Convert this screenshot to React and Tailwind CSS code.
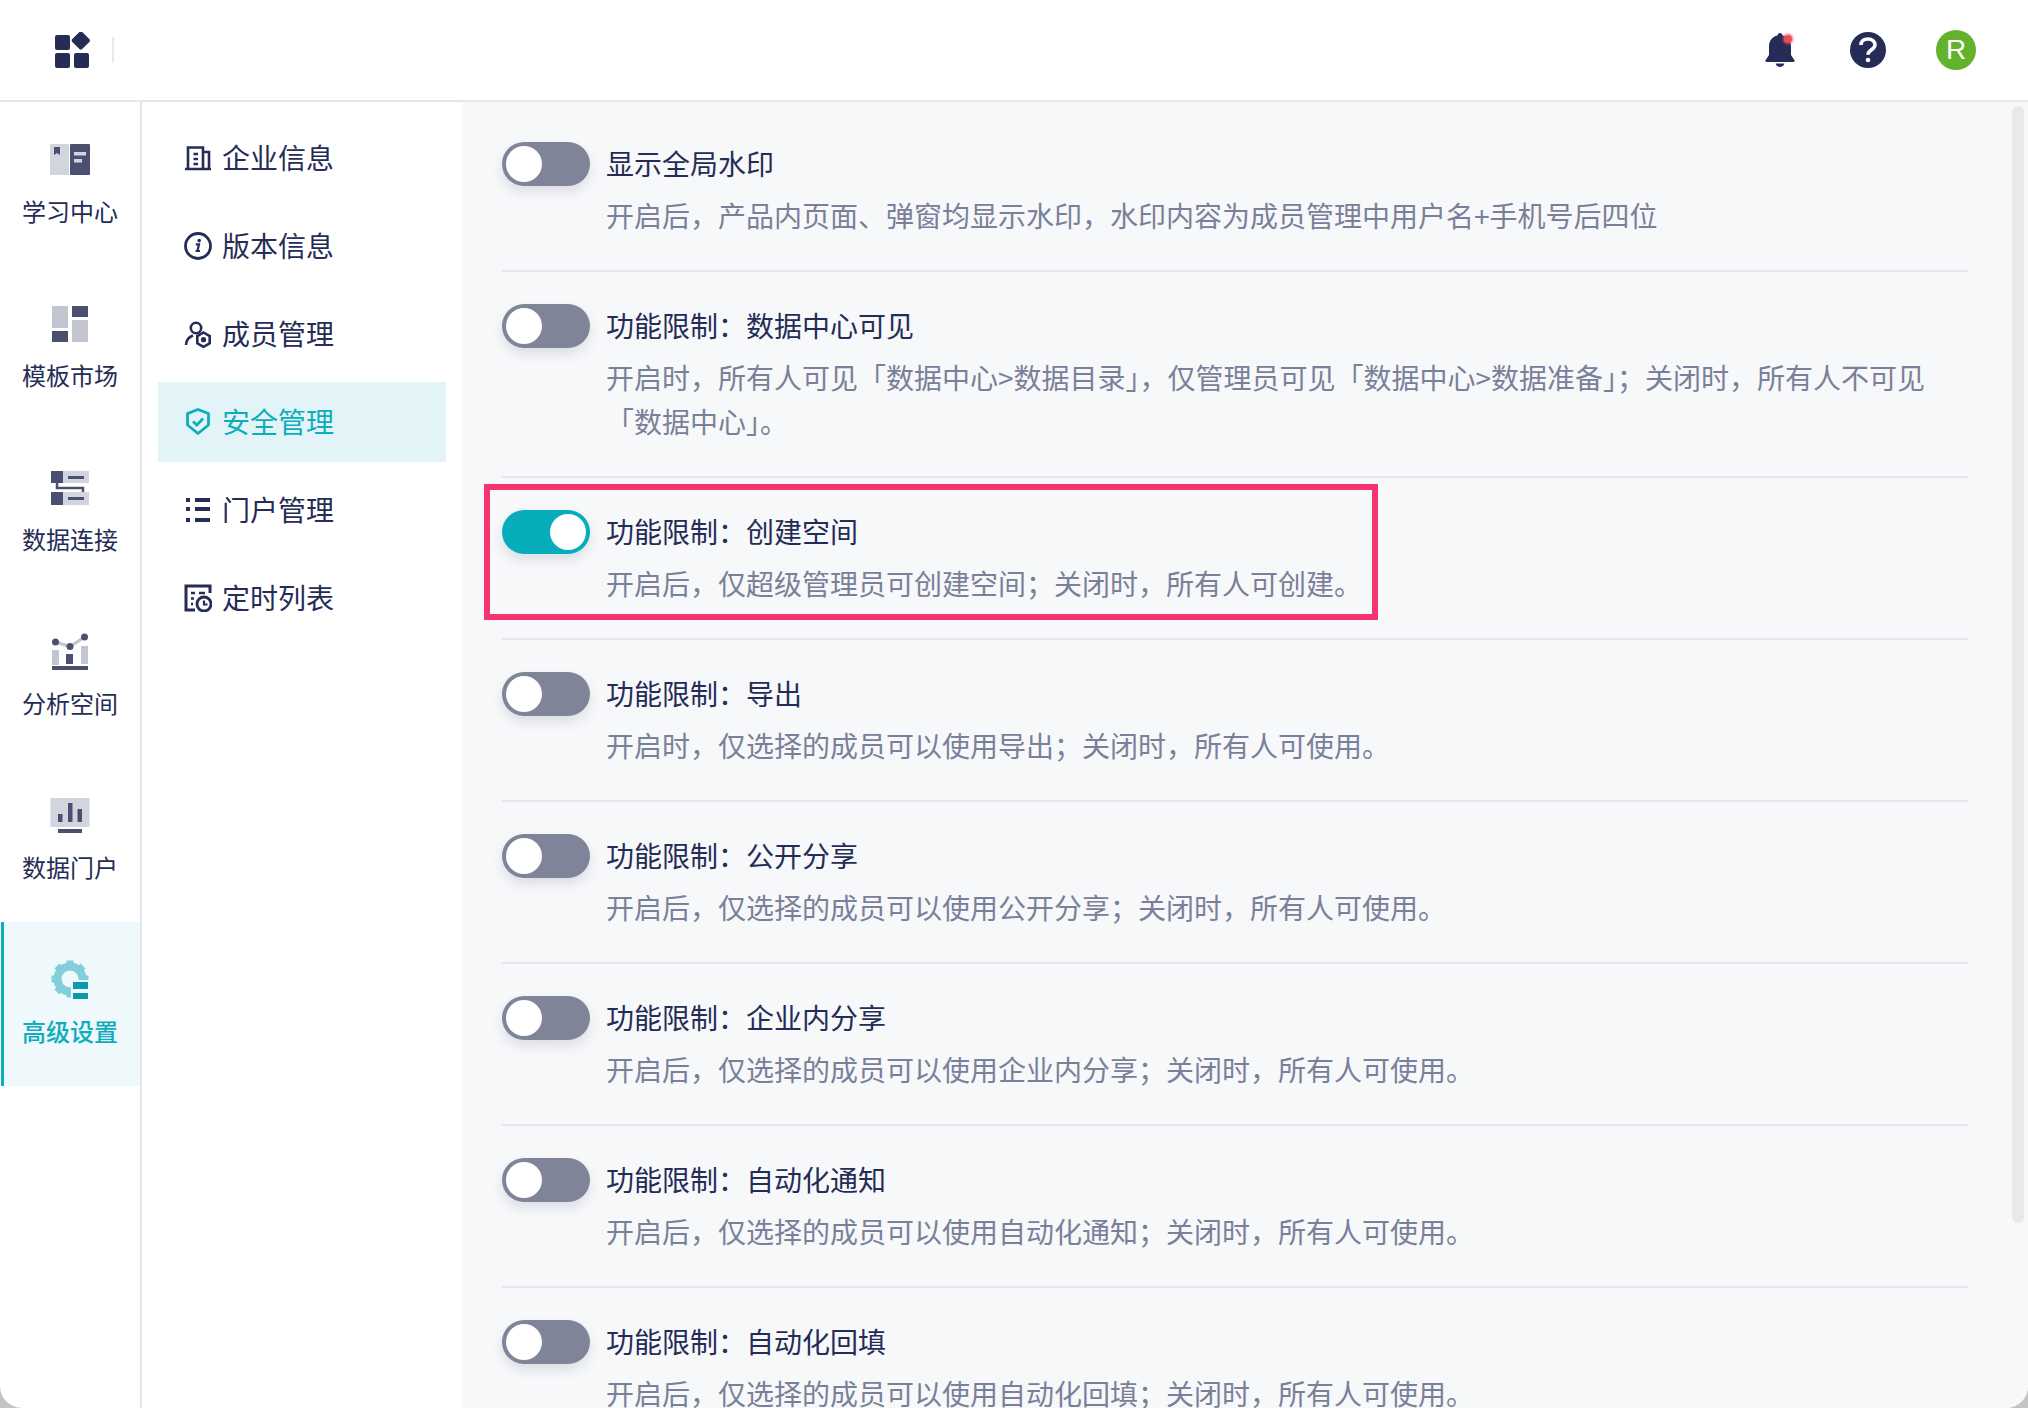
import { useState } from 'react';

const Book = () => (
  <svg width="40" height="40" viewBox="0 0 40 40">
    <rect x="0" y="4" width="19" height="31" fill="#d3d5de" />
    <path d="M4 7h6v8l-3-2-3 2z" fill="#4b5070" />
    <rect x="20" y="4" width="20" height="31" rx="1" fill="#4b5070" />
    <rect x="24" y="12" width="12" height="3.5" fill="#d3d5de" />
    <rect x="24" y="19" width="8" height="3.5" fill="#d3d5de" />
  </svg>
);

const Template = () => (
  <svg width="40" height="40" viewBox="0 0 40 40">
    <rect x="2" y="2" width="16" height="22" fill="#c3c5d1" />
    <rect x="22" y="2" width="16" height="11" fill="#4b5070" />
    <rect x="22" y="16" width="16" height="22" fill="#c3c5d1" />
    <rect x="2" y="27" width="16" height="11" fill="#4b5070" />
  </svg>
);

const Connect = () => (
  <svg width="40" height="40" viewBox="0 0 40 40">
    <rect x="13" y="3" width="26" height="12" fill="#d3d5de" />
    <rect x="13" y="24" width="26" height="13" fill="#d3d5de" />
    <rect x="1" y="3" width="12" height="12" fill="#4b5070" />
    <rect x="1" y="24" width="12" height="13" fill="#4b5070" />
    <rect x="18" y="8" width="16" height="3" fill="#4b5070" />
    <rect x="18" y="29" width="16" height="3" fill="#4b5070" />
    <path d="M7 15v5h26v4" fill="none" stroke="#4b5070" strokeWidth="2.5" />
  </svg>
);

const Analysis = () => (
  <svg width="40" height="40" viewBox="0 0 40 40">
    <path d="M5.5 10L20 14.5 34.5 5" fill="none" stroke="#c3c5d1" strokeWidth="3" />
    <rect x="2" y="18" width="7" height="15" fill="#c3c5d1" />
    <rect x="31" y="14" width="7" height="18" fill="#c3c5d1" />
    <rect x="16" y="22" width="7" height="10" fill="#4b5070" />
    <rect x="2" y="34" width="36" height="4" fill="#4b5070" />
    <circle cx="5.5" cy="10" r="3.5" fill="#4b5070" />
    <circle cx="20" cy="14.5" r="3.5" fill="#4b5070" />
    <circle cx="34.5" cy="5" r="3.5" fill="#4b5070" />
  </svg>
);

const Portal = () => (
  <svg width="40" height="40" viewBox="0 0 40 40">
    <rect x="0.5" y="2" width="39" height="29" fill="#d3d5de" />
    <rect x="8" y="18" width="4.5" height="8" fill="#4b5070" />
    <rect x="18" y="7" width="4.5" height="19" fill="#4b5070" />
    <rect x="27.5" y="13" width="4.5" height="13" fill="#4b5070" />
    <rect x="8" y="33" width="24" height="4" fill="#4b5070" />
  </svg>
);

const teeth = [0, 45, 90, 135, 180, 225, 270, 315];

const Gear = () => (
  <svg width="40" height="40" viewBox="0 0 40 40">
    <circle cx="20" cy="19" r="12.5" fill="none" stroke="#83cedb" strokeWidth="8" />
    {teeth.map((deg) => (
      <rect key={deg} x="16.5" y="0.5" width="7" height="6" fill="#83cedb" transform={`rotate(${deg} 20 19)`} />
    ))}
    <rect x="21" y="20" width="19" height="20" fill="#eff8fb" />
    <rect x="23" y="22" width="15" height="7" fill="#0a9aad" />
    <rect x="23" y="33" width="15" height="6" fill="#0a9aad" />
  </svg>
);

const Building = () => (
  <svg width="28" height="28" viewBox="0 0 28 28" fill="none" stroke="currentColor" strokeWidth="2.600">
    <path d="M1 25H27M4 25V3.500H19V25M19 8H25V25M9.500 10H14M9.500 15H14M9.500 20H14" />
  </svg>
);

const Info = () => (
  <svg width="28" height="28" viewBox="0 0 28 28" fill="none" stroke="currentColor">
    <circle cx="14" cy="14" r="12.500" strokeWidth="2.800" />
    <circle cx="15.200" cy="8.600" r="1.800" fill="currentColor" stroke="none" />
    <path d="M11.800 12.400H15L13.400 19H11.600M13.400 19H16" strokeWidth="2.200" />
  </svg>
);

const Member = () => (
  <svg width="28" height="28" viewBox="0 0 28 28" fill="none" stroke="currentColor" strokeWidth="2.600">
    <circle cx="12" cy="8" r="5.200" />
    <path d="M2 25c0-5 3-8 7-9.500" />
    <path d="M19.500 12.500l6.200 3.600v7.200l-6.200 3.600-6.200-3.600v-7.200z" />
    <circle cx="19.500" cy="19.700" r="2.600" fill="currentColor" stroke="none" />
  </svg>
);

const Shield = () => (
  <svg width="28" height="28" viewBox="0 0 28 28" fill="none" stroke="currentColor" strokeWidth="2.800">
    <path d="M14 1.500l10.500 4v11.500L14 25.500 3.500 17V5.500z" strokeLinejoin="round" />
    <path d="M9 13.500l3.800 3.600L19 10.500" />
  </svg>
);

const ListIcon = () => (
  <svg width="28" height="28" viewBox="0 0 28 28" fill="currentColor">
    <rect x="2" y="2" width="4" height="4" />
    <rect x="2" y="11" width="4" height="4" />
    <rect x="2" y="22" width="4" height="4" />
    <rect x="11" y="2" width="15" height="4" />
    <rect x="11" y="11" width="15" height="4" />
    <rect x="11" y="22" width="15" height="4" />
  </svg>
);

const Timer = () => (
  <svg width="28" height="28" viewBox="0 0 28 28" fill="none" stroke="currentColor">
    <path d="M11 26H2V2H26V9" strokeWidth="3" />
    <path d="M7 9H11M7 14.500H10M7 20H9M15 9H21" strokeWidth="2.400" />
    <circle cx="20" cy="20" r="7" strokeWidth="2.800" />
    <path d="M20 16.500V20.500H23.500" strokeWidth="2.200" />
  </svg>
);

const railItems = [
  { name: '学习中心', icon: Book },
  { name: '模板市场', icon: Template },
  { name: '数据连接', icon: Connect },
  { name: '分析空间', icon: Analysis },
  { name: '数据门户', icon: Portal },
  { name: '高级设置', icon: Gear, active: true },
];

const navItems = [
  { name: '企业信息', icon: Building },
  { name: '版本信息', icon: Info },
  { name: '成员管理', icon: Member },
  { name: '安全管理', icon: Shield, active: true },
  { name: '门户管理', icon: ListIcon },
  { name: '定时列表', icon: Timer },
];

const settings = [
  { title: '显示全局水印', desc: '开启后，产品内页面、弹窗均显示水印，水印内容为成员管理中用户名+手机号后四位' },
  {
    title: '功能限制：数据中心可见',
    desc: '开启时，所有人可见「数据中心>数据目录」，仅管理员可见「数据中心>数据准备」；关闭时，所有人不可见「数据中心」。',
  },
  { title: '功能限制：创建空间', desc: '开启后，仅超级管理员可创建空间；关闭时，所有人可创建。', on: true, marked: true },
  { title: '功能限制：导出', desc: '开启时，仅选择的成员可以使用导出；关闭时，所有人可使用。' },
  { title: '功能限制：公开分享', desc: '开启后，仅选择的成员可以使用公开分享；关闭时，所有人可使用。' },
  { title: '功能限制：企业内分享', desc: '开启后，仅选择的成员可以使用企业内分享；关闭时，所有人可使用。' },
  { title: '功能限制：自动化通知', desc: '开启后，仅选择的成员可以使用自动化通知；关闭时，所有人可使用。' },
  { title: '功能限制：自动化回填', desc: '开启后，仅选择的成员可以使用自动化回填；关闭时，所有人可使用。' },
];

const Toggle = ({ on }) => (
  <div
    className={`flex h-11 w-[88px] flex-none items-center rounded-full px-1 shadow-[0_6px_12px_rgba(30,40,80,0.12)] ${
      on ? 'justify-end bg-[#07adbb]' : 'justify-start bg-[#7f8499]'
    }`}
  >
    <div className="h-9 w-9 rounded-full bg-white" />
  </div>
);

const App = () => {
  const [rows] = useState(settings);

  return (
    <div className="h-[1408px] overflow-hidden bg-[#c4c4c4] font-['Noto_Sans_CJK_SC','Noto_Sans',sans-serif] text-[#252c56]">
      <div className="flex h-full flex-col overflow-hidden rounded-b-[22px] bg-white">
        {/* Top bar */}
        <header className="flex h-[102px] flex-none items-center justify-between border-b-2 border-[#e5e6ec] pl-[55px] pr-[52px]">
          <div className="flex items-center">
            <svg width="36" height="36" viewBox="0 0 36 36" fill="#252c56">
              <rect x="0" y="3" width="15" height="15" rx="2" />
              <rect x="0" y="21" width="15" height="15" rx="2" />
              <rect x="19" y="21" width="15" height="15" rx="2" />
              <rect x="19" y="2" width="14" height="14" rx="2" transform="rotate(45 26.500 8.500)" />
            </svg>
            <div className="ml-[21px] h-[26px] w-0.5 bg-[#e8e9ef]" />
          </div>
          <div className="flex items-center">
            <div className="relative mr-[52px] h-9 w-9">
              <svg width="36" height="36" viewBox="0 0 36 36" fill="#252c56">
                <path d="M18 1c1.400 0 2.400 1 2.600 2.400C26 4.600 29 9 29 14.500V23l3.500 5.200c.5.800 0 1.800-1 1.800H4.500c-1 0-1.500-1-1-1.800L7 23v-8.500C7 9 10 4.600 15.400 3.400 15.600 2 16.600 1 18 1z" />
                <path d="M13.500 31.500h9c-.6 2.200-2.400 3.500-4.500 3.500s-3.900-1.300-4.500-3.500z" />
              </svg>
              <div className="absolute left-[20px] top-[1px] flex h-3 w-3 items-center justify-center rounded-full bg-[#f0505a]/40">
                <div className="h-2 w-2 rounded-full bg-[#ee4d55]" />
              </div>
            </div>
            <div className="mr-[50px] flex h-9 w-9 items-center justify-center rounded-full bg-[#252c56]">
              <svg width="20" height="26" viewBox="0 0 20 26" fill="none" stroke="#fff" strokeWidth="3.600">
                <path d="M3 8c0-4 3-6 7-6s7 2.200 7 5.800c0 5-7 5-7 10" />
                <circle cx="10" cy="23" r="2.300" fill="#fff" stroke="none" />
              </svg>
            </div>
            <div className="flex h-10 w-10 items-center justify-center rounded-full bg-[#62b22b] font-['Liberation_Sans',sans-serif] text-[28px] text-white">
              R
            </div>
          </div>
        </header>

        <div className="flex min-h-0 flex-1">
          {/* Main rail */}
          <aside className="w-[142px] flex-none border-r-2 border-[#e5e6ec]">
            {railItems.map((item) => (
              <div
                key={item.name}
                className={`flex h-[164px] flex-col items-center pt-[38px] ${
                  item.active ? 'ml-px border-l-[3px] border-[#0cadbd] bg-[#eff8fb] pr-1 font-medium text-[#0cadbd]' : ''
                }`}
              >
                <item.icon />
                <div className="mt-[15px] text-2xl leading-8">{item.name}</div>
              </div>
            ))}
          </aside>

          {/* Sub menu */}
          <nav className="flex w-[320px] flex-none flex-col gap-2 px-4 pt-4">
            {navItems.map((item) => (
              <div
                key={item.name}
                className={`flex h-20 items-center gap-[10px] pl-[26px] text-[28px] ${
                  item.active ? 'bg-[#e3f4f8] text-[#0cadbd]' : ''
                }`}
              >
                <item.icon />
                <span className="-translate-y-px">{item.name}</span>
              </div>
            ))}
          </nav>

          {/* Settings list */}
          <main className="relative min-w-0 flex-1 overflow-hidden bg-[#f7f8fa] pl-10 pr-[60px] pt-10">
            {rows.map((row, i) => (
              <div key={row.title} className={`relative pb-8 ${i > 0 ? 'border-t-2 border-[#e6e7ee] pt-8' : ''}`}>
                <div className="flex gap-4">
                  <Toggle on={row.on} />
                  <div className="min-w-0 flex-1 -translate-y-px text-[28px] leading-[44px]">
                    <div>{row.title}</div>
                    <div className="mt-2 text-[#7a8099]">{row.desc}</div>
                  </div>
                </div>
                {row.marked && (
                  <div className="absolute left-[-18px] top-1.5 h-[136px] w-[894px] border-[6px] border-[#f63570]" />
                )}
              </div>
            ))}
            {/* scrollbar thumb */}
            <div className="absolute right-1 top-1 h-[1117px] w-3 rounded-full bg-[#e8e9ea]" />
          </main>
        </div>
      </div>
    </div>
  );
};

export default App;
